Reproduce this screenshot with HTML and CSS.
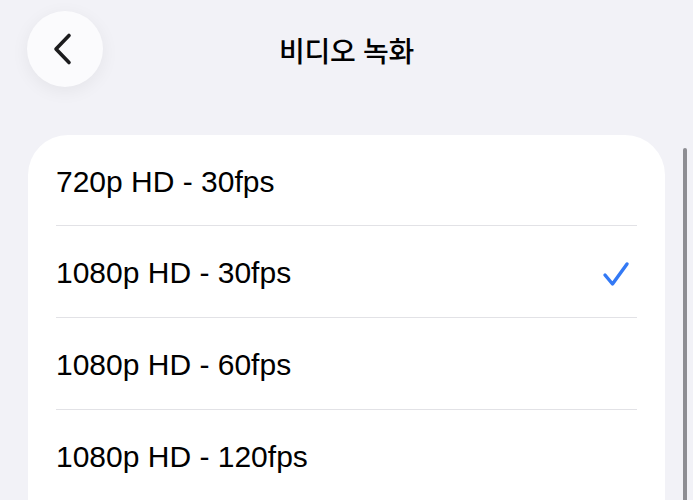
FILE: index.html
```html
<!DOCTYPE html>
<html lang="ko">
<head>
<meta charset="utf-8">
<link rel="stylesheet" href="styles.css">
</head>
<body>
<div class="screen">
  <header class="nav">
    <button class="back" aria-label="뒤로">
      <svg width="24" height="34" viewBox="0 0 24 34"><path d="M18 3.5 L5 17 L18 30.5" fill="none" stroke="#1c1c1e" stroke-width="3.6" stroke-linecap="round" stroke-linejoin="round"/></svg>
    </button>
    <h1 class="title">비디오 녹화</h1>
  </header>
  <div class="card">
    <div class="row"><span>720p HD - 30fps</span></div>
    <div class="row"><span>1080p HD - 30fps</span>
      <svg class="check" width="28" height="28" viewBox="0 0 28 28"><path d="M3 15 L10.5 24 L25 4" fill="none" stroke="#3379f5" stroke-width="3.4" stroke-linecap="round" stroke-linejoin="round"/></svg>
    </div>
    <div class="row"><span>1080p HD - 60fps</span></div>
    <div class="row"><span>1080p HD - 120fps</span></div>
  </div>
  <div class="scrollbar"></div>
</div>
</body>
</html>
```
FILE: styles.css
```css
html, body {
  margin: 0;
  padding: 0;
  background: #f2f2f7;
}
.screen {
  width: 693px;
  height: 500px;
  overflow: hidden;
  position: relative;
  font-family: "Liberation Sans", "Noto Sans CJK KR", sans-serif;
  color: #000;
}
.nav {
  height: 135px;
  position: relative;
}
.back {
  position: absolute;
  left: 27px;
  top: 11px;
  width: 76px;
  height: 76px;
  border-radius: 50%;
  border: none;
  background: #fbfbfd;
  box-shadow: 0 4px 18px rgba(0,0,0,0.06);
  display: flex;
  align-items: center;
  justify-content: center;
  padding: 0 4px 0 0;
}
.title {
  margin: 0;
  padding-top: 32px;
  text-align: center;
  font-family: "Noto Sans CJK KR", sans-serif;
  font-size: 28px;
  font-weight: 500;
  line-height: 36px;
  letter-spacing: -0.3px;
}
.card {
  margin-left: 28px;
  width: 637px;
  background: #fff;
  border-radius: 40px 40px 0 0;
  padding-left: 28px;
  box-sizing: border-box;
}
.row {
  height: 92px;
  display: flex;
  align-items: center;
  justify-content: space-between;
  border-bottom: 1px solid #e2e2e6;
  margin-right: 28px;
  padding-right: 7px;
  font-size: 30px;
  box-sizing: border-box;
}
.row:first-child {
  height: 91px;
}
.row span {
  padding-top: 3px;
}
.check {
  margin-top: 4px;
}
.scrollbar {
  position: absolute;
  right: 6px;
  top: 148px;
  width: 4px;
  height: 360px;
  border-radius: 2px;
  background: #8e8e93;
}
```
